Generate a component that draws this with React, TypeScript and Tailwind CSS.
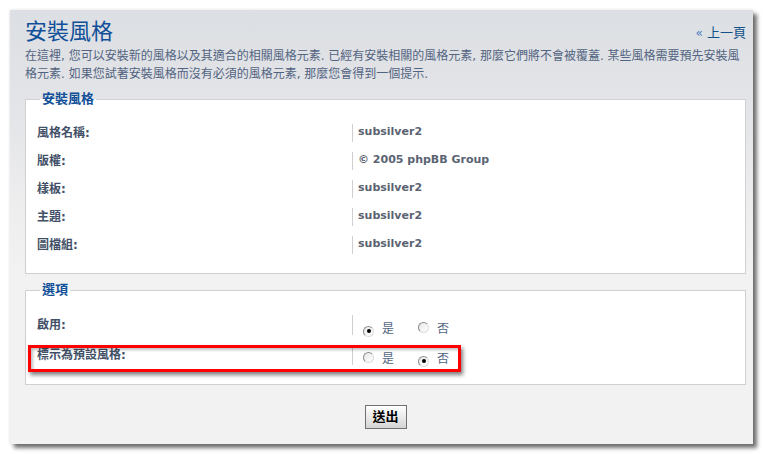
import React from "react";

const FONT = "font-['DejaVu_Sans','Noto_Sans_CJK_TC',sans-serif]";

function Radio({ checked }: { checked?: boolean }) {
  return (
    <span className="relative inline-flex h-[11px] w-[11px] items-center justify-center rounded-full border border-t-[#8c8c8c] border-l-[#8c8c8c] border-r-[#dcdcdc] border-b-[#dcdcdc] bg-[linear-gradient(135deg,#e8e8e8,#ffffff)]">
      {checked && <span className="h-[4px] w-[4px] rounded-full bg-black" />}
    </span>
  );
}

function InfoRow({ label, value }: { label: string; value: string }) {
  return (
    <div className="flex h-[28px] items-center">
      <dt className="w-[315px] text-[12px] font-bold text-[#425067]">{label}:</dt>
      <dd className="h-[18px] border-l border-[#cfcfcf] pl-[5px] pt-[1px] text-[11px] font-bold leading-[14px] text-[#5a6372]">
        {value}
      </dd>
    </div>
  );
}

function RadioRow({ label, yes }: { label: string; yes: boolean }) {
  return (
    <div className="flex h-[30px] items-center">
      <dt className="w-[315px] text-[12px] font-bold text-[#425067]">{label}:</dt>
      <dd className="flex h-[20px] items-start border-l border-[#cfcfcf] pl-[10px] text-[12px] text-[#536482]">
        <span className="mt-[5px]"><Radio checked={yes} /></span>
        <span className="ml-[8px] mt-[7px] leading-[14px]">是</span>
        <span className="ml-[24px] mt-[5px]"><Radio checked={!yes} /></span>
        <span className="ml-[8px] mt-[7px] leading-[14px]">否</span>
      </dd>
    </div>
  );
}

function Box({ title, children }: { title: string; children: React.ReactNode }) {
  return (
    <fieldset className="mt-[8px] border border-[#d0d0d0] bg-white pl-[11px] pt-[12px] pb-[14px]">
      <legend className="ml-[3px] px-[2px] text-[13px] font-bold leading-[16px] text-[#115098]">
        {title}
      </legend>
      <dl>{children}</dl>
    </fieldset>
  );
}

export default function App() {
  return (
    <div className={`min-h-screen bg-white pl-[10px] pt-[10px] ${FONT}`}>
      <div className="relative h-[434px] w-[743px] bg-[linear-gradient(to_bottom,#dcdfe3_0px,#e4e5e8_110px,#eeeeef_200px,#f2f2f2_270px)] pl-[15px] pr-[7px] pt-[8px] shadow-[0_0_3px_rgba(0,0,0,0.12),4px_4px_4px_rgba(0,0,0,0.55)]">
        <div className="flex h-[28px] items-center justify-between">
          <h1 className="text-[22px] font-normal leading-[28px] text-[#115098]">安裝風格</h1>
          <a className="pt-[2px] text-[13px] text-[#105289]">
            <span className="text-[12px] text-[#4a7fc0]">«</span> 上一頁
          </a>
        </div>
        <div className="mt-[1px] text-[12px] leading-[18px] text-[#536482]">
          <p className="whitespace-nowrap">
            在這裡, 您可以安裝新的風格以及其適合的相關風格元素. 已經有安裝相關的風格元素, 那麼它們將不會被覆蓋. 某些風格需要預先安裝風
          </p>
          <p className="whitespace-nowrap">
            格元素. 如果您試著安裝風格而沒有必須的風格元素, 那麼您會得到一個提示.
          </p>
        </div>

        <Box title="安裝風格">
          <InfoRow label="風格名稱" value="subsilver2" />
          <InfoRow label="版權" value="© 2005 phpBB Group" />
          <InfoRow label="樣板" value="subsilver2" />
          <InfoRow label="主題" value="subsilver2" />
          <InfoRow label="圖檔組" value="subsilver2" />
        </Box>

        <Box title="選項">
          <RadioRow label="啟用" yes={true} />
          <RadioRow label="標示為預設風格" yes={false} />
        </Box>

        <div className="mt-[20px] flex justify-center">
          <button
            type="button"
            className="h-[24px] w-[42px] border border-[#707070] bg-[linear-gradient(to_bottom,#ffffff,#e6e6e6_60%,#d4d4d4)] text-[13px] font-bold text-black"
          >
            送出
          </button>
        </div>

        {/* annotation box */}
        <div className="absolute left-[18px] top-[335px] h-[27px] w-[433px] border-[3px] border-[#ff0000] shadow-[2px_3px_4px_rgba(0,0,0,0.5),inset_2px_2px_3px_rgba(0,0,0,0.25)]" />
      </div>
    </div>
  );
}
